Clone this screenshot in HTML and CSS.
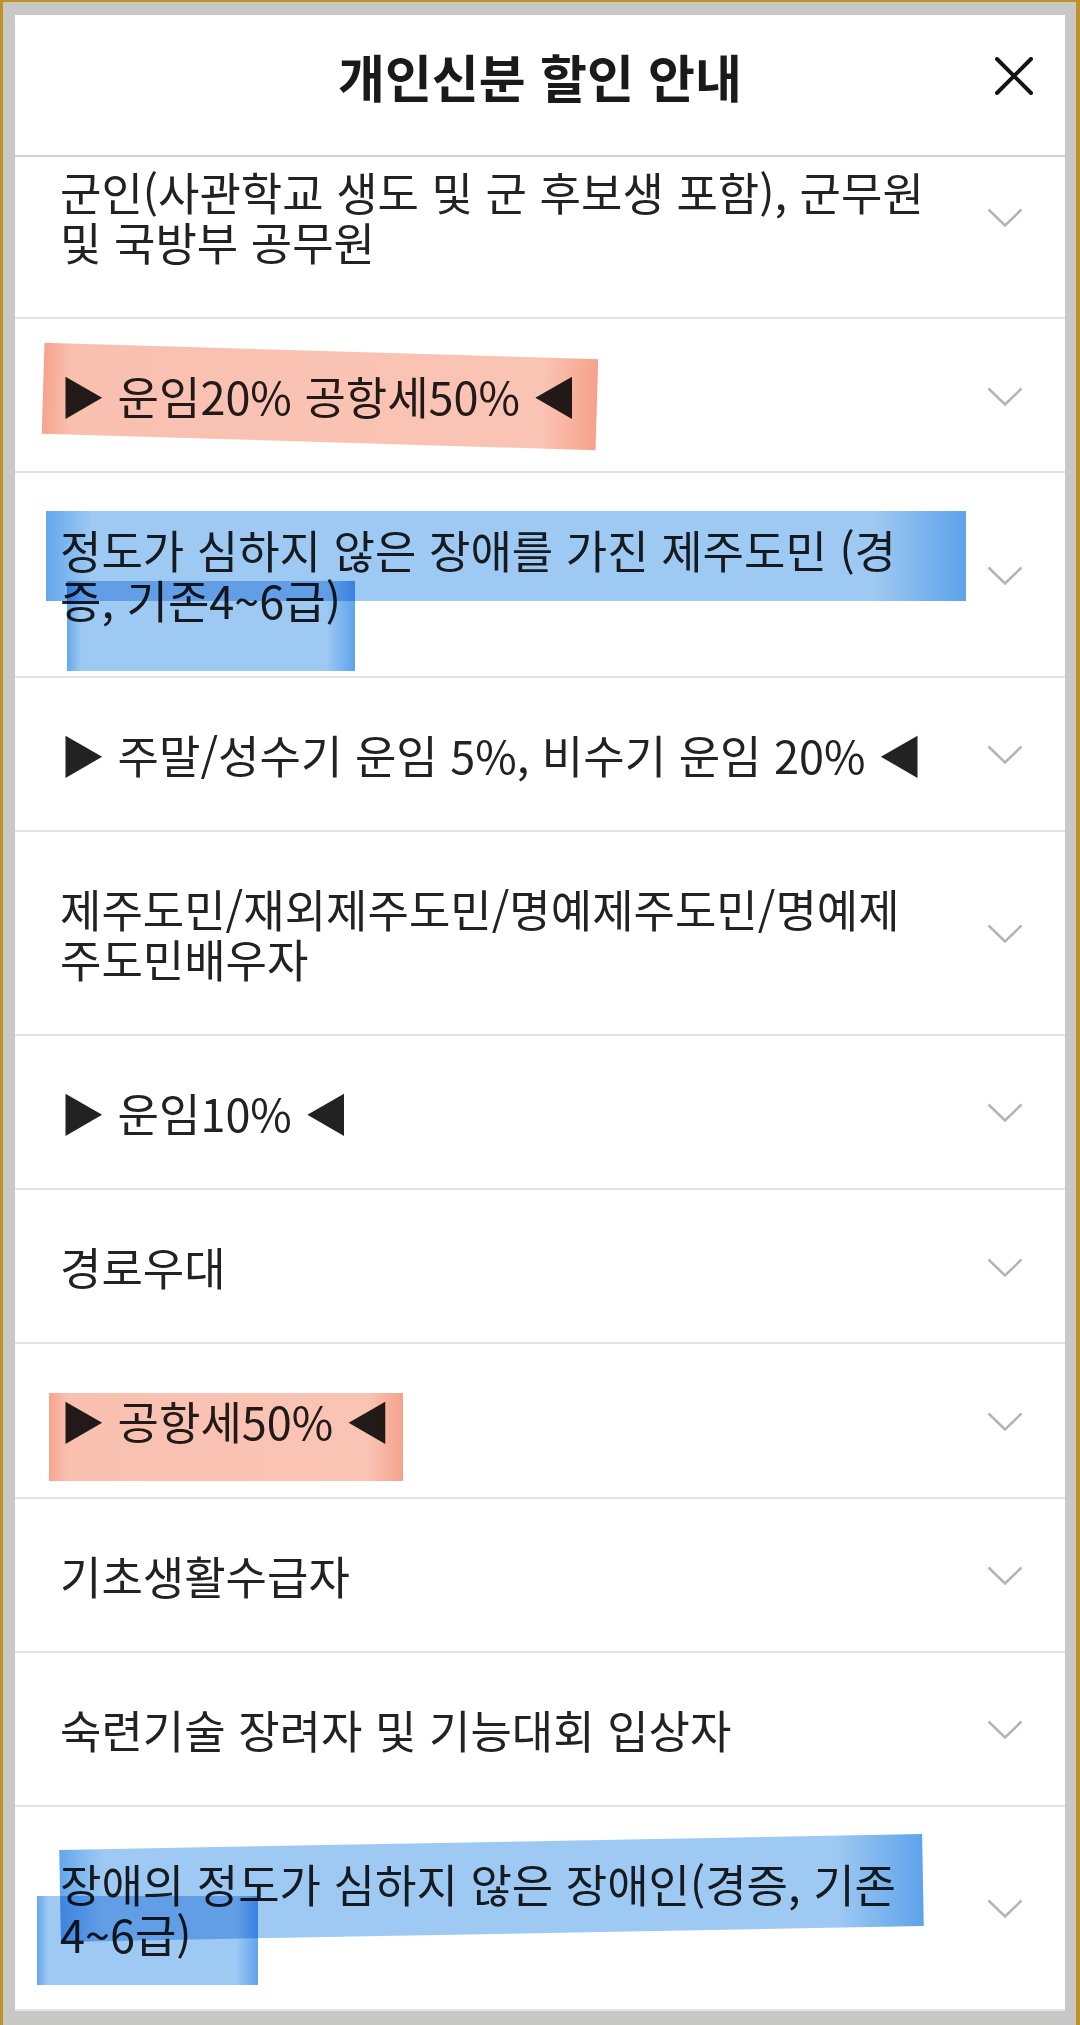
FILE: index.html
```html
<!DOCTYPE html>
<html lang="ko">
<head>
  <meta charset="UTF-8">
  <meta name="viewport" content="width=device-width, initial-scale=1.0">
  <title>개인신분 할인 안내</title>
  <link rel="stylesheet" href="styles.css">
</head>
<body>

  <div class="sheet">
    <header class="sheet-head">
      <span></span>
      <h1 class="sheet-title">개인신분 할인 안내</h1>
      <button class="close-btn" aria-label="닫기">
        <svg width="38" height="38" viewBox="0 0 38 38">
          <path d="M2 2 L36 36 M36 2 L2 36" stroke="#141414" stroke-width="4" stroke-linecap="round" fill="none"/>
        </svg>
      </button>
    </header>

    <div class="sheet-body">
      <ul class="discount-list">
        <li class="discount-item">
          <span class="item-text">군인(사관학교 생도 및 군 후보생 포함), 군무원 및 국방부 공무원</span>
          <svg class="chevron" viewBox="0 0 36 19"><polyline points="1.5,1.5 18,17.5 34.5,1.5"/></svg>
        </li>
        <li class="discount-item">
          <span class="item-text">▶ 운임20% 공항세50% ◀</span>
          <svg class="chevron" viewBox="0 0 36 19"><polyline points="1.5,1.5 18,17.5 34.5,1.5"/></svg>
          <span class="mark mark-orange mark-1"></span>
        </li>
        <li class="discount-item">
          <span class="item-text">정도가 심하지 않은 장애를 가진 제주도민 (경증, 기존4~6급)</span>
          <svg class="chevron" viewBox="0 0 36 19"><polyline points="1.5,1.5 18,17.5 34.5,1.5"/></svg>
          <span class="mark mark-blue mark-2"></span>
          <span class="mark mark-blue mark-3"></span>
        </li>
        <li class="discount-item">
          <span class="item-text">▶ 주말/성수기 운임 5%, 비수기 운임 20% ◀</span>
          <svg class="chevron" viewBox="0 0 36 19"><polyline points="1.5,1.5 18,17.5 34.5,1.5"/></svg>
        </li>
        <li class="discount-item">
          <span class="item-text">제주도민/재외제주도민/명예제주도민/명예제주도민배우자</span>
          <svg class="chevron" viewBox="0 0 36 19"><polyline points="1.5,1.5 18,17.5 34.5,1.5"/></svg>
        </li>
        <li class="discount-item">
          <span class="item-text">▶ 운임10% ◀</span>
          <svg class="chevron" viewBox="0 0 36 19"><polyline points="1.5,1.5 18,17.5 34.5,1.5"/></svg>
        </li>
        <li class="discount-item">
          <span class="item-text">경로우대</span>
          <svg class="chevron" viewBox="0 0 36 19"><polyline points="1.5,1.5 18,17.5 34.5,1.5"/></svg>
        </li>
        <li class="discount-item">
          <span class="item-text">▶ 공항세50% ◀</span>
          <svg class="chevron" viewBox="0 0 36 19"><polyline points="1.5,1.5 18,17.5 34.5,1.5"/></svg>
          <span class="mark mark-orange mark-4"></span>
        </li>
        <li class="discount-item">
          <span class="item-text">기초생활수급자</span>
          <svg class="chevron" viewBox="0 0 36 19"><polyline points="1.5,1.5 18,17.5 34.5,1.5"/></svg>
        </li>
        <li class="discount-item">
          <span class="item-text">숙련기술 장려자 및 기능대회 입상자</span>
          <svg class="chevron" viewBox="0 0 36 19"><polyline points="1.5,1.5 18,17.5 34.5,1.5"/></svg>
        </li>
        <li class="discount-item">
          <span class="item-text">장애의 정도가 심하지 않은 장애인(경증, 기존4~6급)</span>
          <svg class="chevron" viewBox="0 0 36 19"><polyline points="1.5,1.5 18,17.5 34.5,1.5"/></svg>
          <span class="mark mark-blue mark-5"></span>
          <span class="mark mark-blue mark-6"></span>
        </li>
      </ul>
    </div>
  </div>

</body>
</html>
```

FILE: styles.css
```css
body {
  margin: 0;
  padding: 13px 11px 14px 12px;
  background-color: #c8c8c6;
  border-top: 2px solid #bd922d;
  border-left: 3px solid #bd922d;
  border-right: 4px solid #bd922d;
  font-family: "Noto Sans CJK KR", "Noto Sans", sans-serif;
  color: #222;
}

.sheet {
  height: 1996px;
  background: #ffffff;
  display: flex;
  flex-direction: column;
  overflow: hidden;
}

/* header */
.sheet-head {
  display: grid;
  grid-template-columns: 1fr auto 1fr;
  align-items: center;
  height: 50px;
  padding: 36px 32px 54px;
  border-bottom: 2px solid #d2d2d2;
}

.sheet-title {
  margin: 0;
  font-size: 51px;
  line-height: 50px;
  font-weight: 700;
  color: #1a1a1a;
}

.close-btn {
  justify-self: end;
  width: 38px;
  height: 38px;
  padding: 0;
  border: none;
  background: none;
}

.close-btn svg {
  display: block;
}

/* list */
.sheet-body {
  flex: 1;
  overflow: hidden;
}

.discount-list {
  list-style: none;
  margin: -42px 0 0;
  padding: 0;
}

.discount-item {
  position: relative;
  display: grid;
  grid-template-columns: 1fr 36px;
  column-gap: 54px;
  align-items: center;
  padding: 52px 42px 50.2px 45px;
  border-bottom: 2px solid #e2e2e2;
}

.item-text {
  font-size: 45px;
  line-height: 50px;
}

.chevron {
  width: 36px;
  height: 19px;
  fill: none;
  stroke: #b4b4b4;
  stroke-width: 2.5;
}

/* highlighter marks */
.mark {
  position: absolute;
  mix-blend-mode: multiply;
}

.mark-orange {
  background: linear-gradient(to right, #f6a38d 0%, #f9c0b0 5%, #fac4b4 90%, #f5a28b 100%);
}

.mark-blue {
  background: linear-gradient(to right, #64a7ec 0%, #9ec9f2 5%, #9ec9f2 90%, #5ea3eb 100%);
}

.mark-1 { left: 28px; top: 32px; width: 554px; height: 91px; transform: rotate(1.7deg); }
.mark-2 { left: 31px; top: 38px; width: 920px; height: 90px; }
.mark-3 { left: 52px; top: 108px; width: 288px; height: 90px; }
.mark-4 { left: 34px; top: 49px; width: 354px; height: 88px; }
.mark-5 { left: 45px; top: 35px; width: 863px; height: 92px; transform: rotate(-1.05deg); }
.mark-6 { left: 22px; top: 89px; width: 221px; height: 89px; }
```
